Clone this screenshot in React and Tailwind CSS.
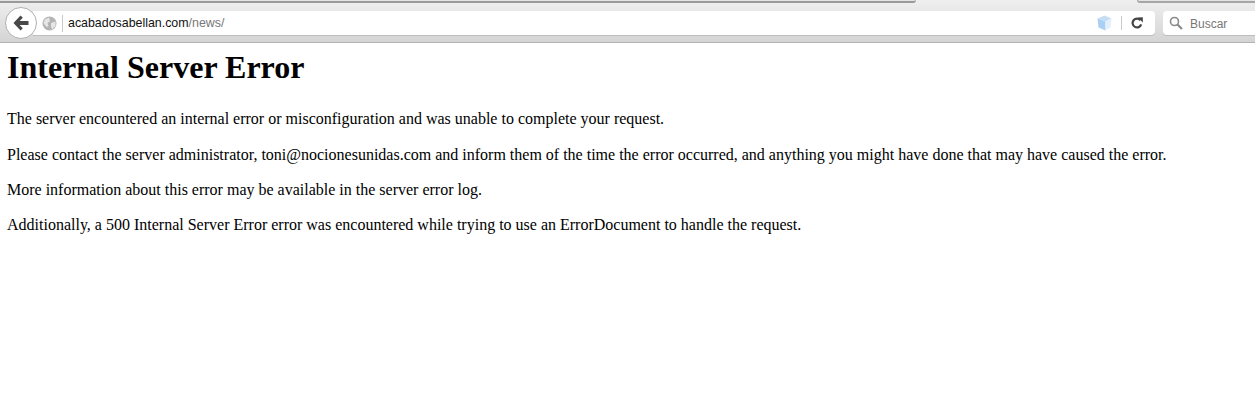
import React from "react";

function BackIcon() {
  return (
    <svg width="16" height="16" viewBox="0 0 16 16">
      <path d="M7.5 0.5 L9.8 2.8 L6.6 6 H15.5 V10 H6.6 L9.8 13.2 L7.5 15.5 L0.5 8 Z" fill="#484848" />
    </svg>
  );
}

function GlobeIcon() {
  return (
    <svg width="15" height="15" viewBox="0 0 15 15">
      <circle cx="7.5" cy="7.5" r="7" fill="#b4b4b4" />
      <path d="M3 3.5 L7 1.5 L8 5 L5.5 7 L6.5 10 L4.5 11 L1.5 7 Z M9 7 L13.5 5.5 L13.5 10 L10 13.5 L9 10 Z" fill="#e6e6e6" />
    </svg>
  );
}

function CubeIcon() {
  return (
    <svg width="15" height="16" viewBox="0 0 15 16">
      <path d="M7.5 0.5 L14.5 3.5 L8.5 6.5 L0.5 3.5 Z" fill="#c5def6" />
      <path d="M0.5 3.5 L8.5 6.5 L8.5 15.5 L1.5 12.5 Z" fill="#a9d0f4" />
      <path d="M14.5 3.5 L8.5 6.5 L8.5 15.5 L13.5 12.5 Z" fill="#e3f0fb" />
    </svg>
  );
}

function ReloadIcon() {
  return (
    <svg width="12" height="12" viewBox="0 0 12 12">
      <path d="M9.4 3.2 A4.4 4.4 0 1 0 10.2 7.4" fill="none" stroke="#444" strokeWidth="2.2" />
      <path d="M6.8 0.6 L11.8 0.2 L11.8 5.6 Z" fill="#444" />
    </svg>
  );
}

function SearchIcon() {
  return (
    <svg width="14" height="14" viewBox="0 0 14 14">
      <circle cx="5.5" cy="5.5" r="4" fill="none" stroke="#8a8a8a" strokeWidth="1.6" />
      <path d="M8.5 8.5 L13 13" stroke="#8a8a8a" strokeWidth="2.2" />
    </svg>
  );
}

function Toolbar() {
  return (
    <div className="relative h-[43px] bg-gradient-to-b from-[#efefef] to-[#d4d4d4] border-b border-[#b4b4b4] font-['Liberation_Sans',sans-serif]">
      {/* tab edges along the top */}
      <div className="absolute left-0 top-0 h-[3px] w-[916px] bg-[#e4e4e4] border-b-2 border-[#9a9a9a] rounded-br-[6px]" />
      <div className="absolute right-0 top-0 h-[3px] w-[118px] bg-[#e4e4e4] border-b-2 border-l border-[#a6a6a6] rounded-bl-[6px]" />
      <div className="flex items-center h-[42px] pt-[4px]">
        <div className="relative z-10 ml-[5px] w-[32px] h-[32px] shrink-0 rounded-full bg-white border border-[#b0b0b0] flex items-center justify-center">
          <BackIcon />
        </div>
        <div className="-ml-[4px] flex items-center flex-1 h-[24px] bg-white rounded-r-[4px] shadow-[0_1px_0_#bdbdbd]">
          <div className="ml-[9px] flex items-center">
            <GlobeIcon />
          </div>
          <div className="ml-[5px] w-px h-[17px] bg-[#c8c8c8]" />
          <div className="ml-[5px] flex-1 pt-[1px] text-[12.4px] text-[#111]">
            acabadosabellan.com<span className="text-[#777]">/news/</span>
          </div>
          <CubeIcon />
          <div className="ml-[9px] w-px h-[14px] bg-[#c8c8c8]" />
          <div className="ml-[9px] mr-[12px] flex items-center">
            <ReloadIcon />
          </div>
        </div>
        <div className="ml-[8px] mr-0 w-[92px] h-[24px] shrink-0 bg-white rounded-l-[4px] shadow-[0_1px_0_#bdbdbd] flex items-center pl-[6px] gap-[7px] text-[12px] text-[#777]">
          <SearchIcon />
          <span className="pt-[1px]">Buscar</span>
        </div>
      </div>
    </div>
  );
}

export default function App() {
  return (
    <div className="min-h-[417px] bg-white">
      <Toolbar />
      <div className="px-[7px] pt-[6px] font-['Liberation_Serif',serif] text-[16px] text-black">
        <h1 className="text-[32px] font-bold leading-[37px]">Internal Server Error</h1>
        <p className="mt-[24px] leading-[18px]">
          The server encountered an internal error or misconfiguration and was unable to complete your request.
        </p>
        <p className="mt-[18px] leading-[18px]">
          Please contact the server administrator, toni@nocionesunidas.com and inform them of the time the error occurred, and anything you might have done that may have caused the error.
        </p>
        <p className="mt-[17px] leading-[18px]">
          More information about this error may be available in the server error log.
        </p>
        <p className="mt-[17px] leading-[18px]">
          Additionally, a 500 Internal Server Error error was encountered while trying to use an ErrorDocument to handle the request.
        </p>
      </div>
    </div>
  );
}
